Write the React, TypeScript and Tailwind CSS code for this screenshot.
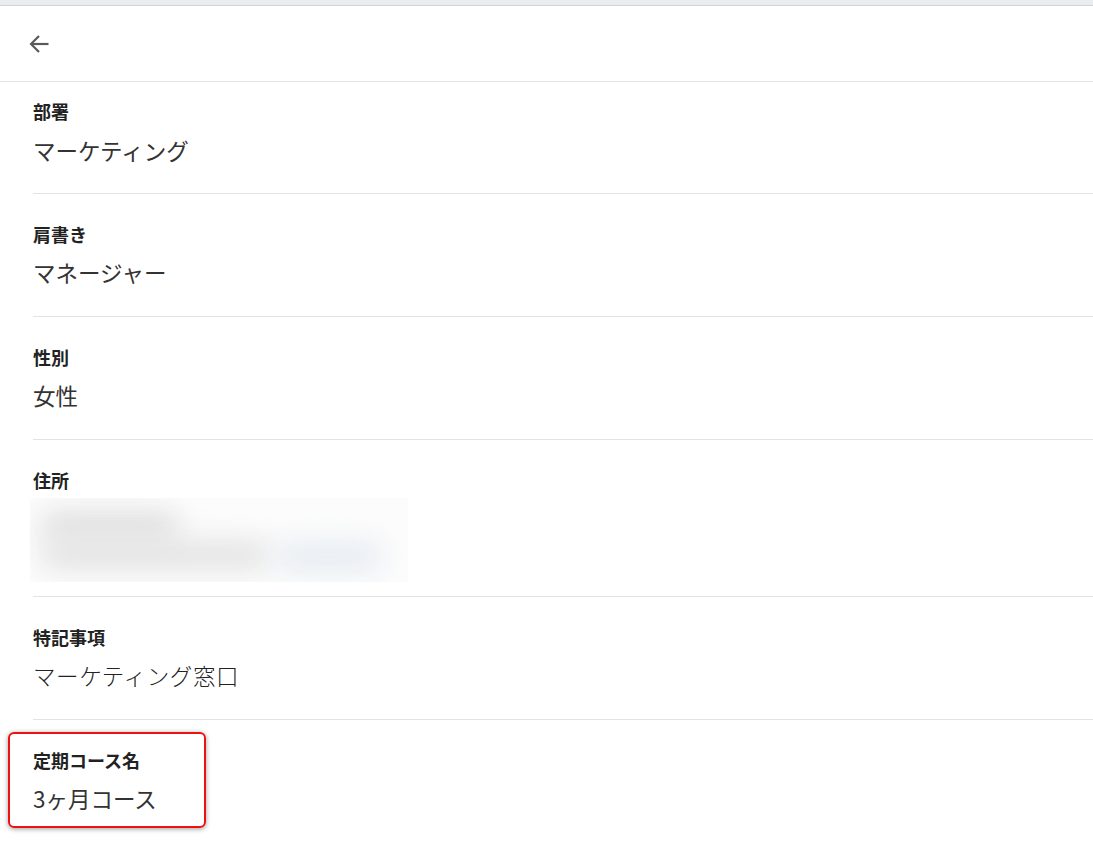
import React from "react";

const font = { fontFamily: '"Noto Sans CJK JP", "Noto Sans", sans-serif' };

type Field = { label: string; value?: string; thin?: boolean; blurred?: boolean };

const fields: Field[] = [
  { label: "部署", value: "マーケティング" },
  { label: "肩書き", value: "マネージャー" },
  { label: "性別", value: "女性" },
  { label: "住所", blurred: true },
  { label: "特記事項", value: "マーケティング窓口", thin: true },
  { label: "定期コース名", value: "3ヶ月コース" },
];

function BlurredAddress() {
  return (
    <div className="-ml-[3px] mt-[6px] flex h-[84px] w-[378px] flex-col gap-[2px] overflow-hidden bg-[#fcfcfc] px-[10px] pt-[14px]">
      <div className="h-[28px] w-[140px] rounded-full bg-[#dedede] blur-[14px]" />
      <div className="flex gap-[4px]">
        <div className="h-[26px] w-[230px] rounded-full bg-[#e0e0e0] blur-[14px]" />
        <div className="h-[30px] w-[110px] rounded-full bg-[#e6ecf2] blur-[14px]" />
      </div>
    </div>
  );
}

function FieldRow({ f, first, last }: { f: Field; first: boolean; last: boolean }) {
  const pb = first ? "pb-[27px]" : f.blurred ? "pb-[14px]" : "pb-[28px]";
  return (
    <div
      className={`ml-[33px] ${first ? "pt-[17px]" : "pt-[28px]"} ${pb} ${
        last ? "" : "border-b border-[#e3e3e3]"
      }`}
    >
      <div className="text-[18px] leading-[24px] font-bold text-[#222]">{f.label}</div>
      {f.blurred ? (
        <BlurredAddress />
      ) : (
        <div
          className={`${first ? "mt-[11px]" : "mt-[10px]"} text-[22.5px] leading-[32px] ${
            f.thin ? "font-light tracking-[0.6px] text-[#222]" : "text-[#333]"
          }`}
        >
          {f.value}
        </div>
      )}
    </div>
  );
}

export default function App() {
  return (
    <div className="relative min-h-[841px] w-full bg-white" style={font}>
      <div className="h-[6px] bg-[#e9edf0] border-b border-[#d2d4d6]" />
      <div className="h-[76px] flex items-center border-b border-[#e3e3e3] pl-[29px]">
        <svg width="20" height="20" viewBox="0 0 20 20" fill="none" stroke="#5a5a5a" strokeWidth="2.2">
          <path d="M19.5 10H2" />
          <path d="M10 2L2 10l8 8" />
        </svg>
      </div>
      {fields.map((f, i) => (
        <FieldRow key={f.label} f={f} first={i === 0} last={i === fields.length - 1} />
      ))}
      {/* annotation highlight */}
      <div className="absolute left-[8px] top-[732px] h-[96px] w-[198px] rounded-[6px] border-2 border-[#ee1111] shadow-[0_1px_5px_rgba(0,0,0,0.4)]" />
    </div>
  );
}
